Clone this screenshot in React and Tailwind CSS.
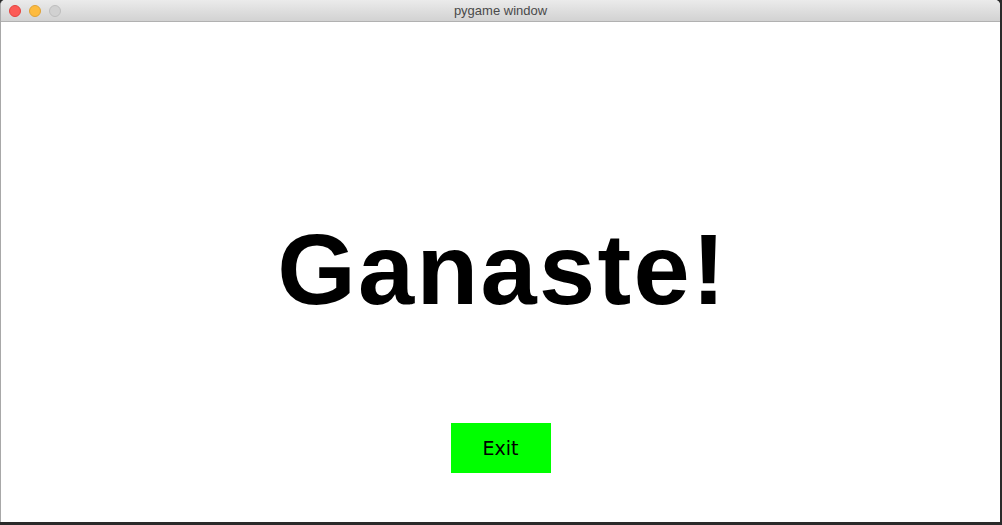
import React from "react";

export default function App() {
  return (
    <div className="w-[1002px] h-[525px] bg-[#2a2a2a] overflow-hidden">
      <div className="w-[1000px] h-[522px] flex flex-col bg-white rounded-t-[5px] overflow-hidden border-l border-[#a8a8a8]">
        {/* title bar */}
        <div className="relative h-[22px] flex items-center justify-center bg-gradient-to-b from-[#ebebeb] to-[#d2d2d2] border-b border-[#b1b1b1]">
          <div className="absolute left-[8px] top-[5px] flex gap-[8px]">
            <span className="w-[12px] h-[12px] rounded-full bg-[#fc5b57] border border-[#e3433f]" />
            <span className="w-[12px] h-[12px] rounded-full bg-[#fdbb3f] border border-[#dea236]" />
            <span className="w-[12px] h-[12px] rounded-full bg-[#d1d1d1] border border-[#bdbdbd]" />
          </div>
          <span className="text-[13px] text-[#4a4a4a] font-['Liberation_Sans',sans-serif] leading-none">
            pygame window
          </span>
        </div>

        {/* game surface */}
        <div className="flex-1 flex flex-col items-center pt-[197px]">
          <h1 className="text-[101px] leading-none font-bold tracking-[2.3px] text-black font-['Liberation_Sans',Arial,sans-serif] translate-x-[2px]">
            Ganaste!
          </h1>
          <button className="mt-[103px] w-[100px] h-[50px] bg-[#00ff00] text-black text-[19px] font-['DejaVu_Sans',cursive] flex items-center justify-center pt-[1px]">
            Exit
          </button>
        </div>
      </div>
    </div>
  );
}
